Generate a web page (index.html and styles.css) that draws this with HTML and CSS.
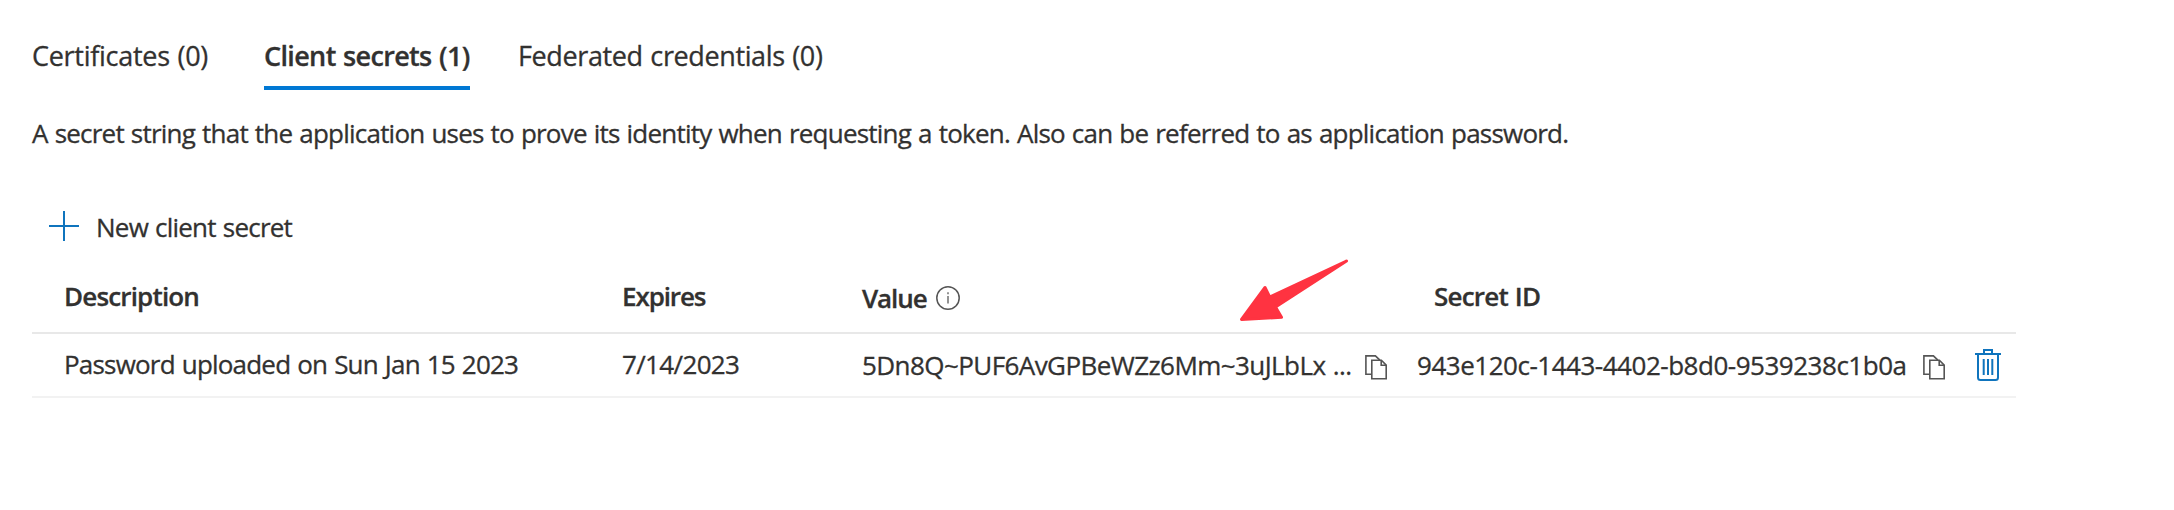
FILE: index.html
```html
<!DOCTYPE html>
<html lang="en">
<head>
<meta charset="utf-8">
<title>Client secrets</title>
<link rel="stylesheet" href="styles.css">
</head>
<body>
<main class="page">
  <nav class="tabs">
    <a class="tab tab-certificates">Certificates (0)</a>
    <a class="tab tab-active">Client secrets (1)</a>
    <a class="tab tab-federated">Federated credentials (0)</a>
  </nav>
  <p class="intro">A secret string that the application uses to prove its identity when requesting a token. Also can be referred to as application password.</p>
  <button class="new-secret" type="button">
    <svg class="plus" width="30" height="30" viewBox="0 0 30 30"><path d="M15 0v30M0 15h30" fill="none" stroke="#0f74bd" stroke-width="2"/></svg>
    <span>New client secret</span>
  </button>
  <section class="table">
    <div class="row head">
      <div class="description">Description</div>
      <div class="expires">Expires</div>
      <div class="value lower"><span>Value</span>
        <svg class="info" width="24" height="24" viewBox="0 0 24 24"><circle cx="12" cy="12" r="11.2" fill="none" stroke="#555" stroke-width="1.5"/><path d="M12 10v7.5M12 6.3v2" stroke="#666" stroke-width="1.4"/></svg>
      </div>
      <div class="secret-id">Secret ID</div>
    </div>
    <div class="row">
      <div class="description">Password uploaded on Sun Jan 15 2023</div>
      <div class="expires">7/14/2023</div>
      <div class="value lower"><span>5Dn8Q~PUF6AvGPBeWZz6Mm~3uJLbLx ...</span>
        <svg class="copy" width="22" height="25" viewBox="0 0 22 25"><g fill="none" stroke="#555" stroke-width="1.6"><path d="M6.8 19.3H.9V.9h9.5l4.5 4.3"/><path d="M6.8 5.3h9.6l4.8 4.8v13.6H6.8z"/><path d="M16.2 5.5v4.8h4.8"/></g></svg>
      </div>
      <div class="secret-id lower"><span>943e120c-1443-4402-b8d0-9539238c1b0a</span>
        <svg class="copy" width="22" height="25" viewBox="0 0 22 25"><g fill="none" stroke="#555" stroke-width="1.6"><path d="M6.8 19.3H.9V.9h9.5l4.5 4.3"/><path d="M6.8 5.3h9.6l4.8 4.8v13.6H6.8z"/><path d="M16.2 5.5v4.8h4.8"/></g></svg>
      </div>
      <svg class="trash" width="26" height="32" viewBox="0 0 26 32"><g fill="none" stroke="#0f74bd" stroke-width="2"><path d="M0 5h26M9 5V1h8v4M3 5v23.5Q3 31 5.500 31h15q2.500 0 2.500-2.500V5"/><path d="M8.700 10v16M13 10v16M17.300 10v16"/></g></svg>
    </div>
    <svg class="arrow" width="112" height="66" viewBox="1238 257 112 66"><path d="M1241.500 319.500L1265 287.500 1269.700 297 1346.500 261 1275.500 307 1281.500 317.300z" fill="#ff3341" stroke="#ff3341" stroke-width="3" stroke-linejoin="round"/></svg>
  </section>
</main>
</body>
</html>
```
FILE: styles.css
```css
body {
  margin: 0;
  background: #fff;
  color: #323130;
  font: 26px/36px "Open Sans", "Noto Sans", sans-serif;
  -webkit-text-stroke: 0.3px currentColor;
}

.page { padding: 38px 158px 0 32px; }

.tabs {
  display: flex;
  font-size: 27px;
  white-space: nowrap;
}

.tab {
  box-sizing: border-box;
  height: 52px;
  border-bottom: 4px solid transparent;
}

.tab-certificates { width: 232px; letter-spacing: -0.28px; word-spacing: 1px; }

.tab-active {
  width: 206px;
  margin-right: 48px;
  border-bottom-color: #0078d4;
  font-weight: 600;
  letter-spacing: -0.65px;
  word-spacing: 1px;
}

.tab-federated { letter-spacing: -0.38px; word-spacing: 1px; }

.intro {
  margin: 25px 0 0;
  letter-spacing: -0.78px;
  word-spacing: 1px;
  white-space: nowrap;
}

.new-secret {
  display: flex;
  align-items: center;
  gap: 17px;
  margin: 58px 0 0;
  padding: 0 0 0 17px;
  border: 0;
  background: none;
  color: inherit;
  font: inherit;
  letter-spacing: -0.77px;
  word-spacing: 1px;
}

.plus { margin-bottom: 2px; }

.table {
  position: relative;
  margin-top: 13px;
}

.row {
  display: grid;
  grid-template-columns: 558px 240px 555px 557px 1fr;
  align-items: start;
  box-sizing: border-box;
  height: 64px;
  padding: 12px 0 0 32px;
  border-bottom: 2px solid #f2f2f2;
  letter-spacing: -0.8px;
  word-spacing: 1px;
  white-space: nowrap;
}

.row .expires { letter-spacing: -0.65px; }

.head {
  height: 76px;
  padding-top: 20px;
  border-bottom-color: #e8e8e8;
  font-weight: 600;
  letter-spacing: -0.83px;
}

.head .expires,
.head .value { letter-spacing: -1.1px; }
.head .secret-id { padding-left: 17px; letter-spacing: -0.8px; }

.value,
.row .secret-id.lower {
  display: flex;
  align-items: center;
}

.row:not(.head) .value { gap: 14px; letter-spacing: -0.57px; }
.row:not(.head) .secret-id { gap: 16px; letter-spacing: -0.48px; }

.row .lower { padding-top: 1px; }
.head .lower { padding-top: 2px; }

.info { margin: 0 0 1px 9px; }

.copy { margin-top: 4px; }

.trash { margin: 3px 0 0 1px; }

.arrow {
  position: absolute;
  top: -1px;
  left: 1206px;
}
```
